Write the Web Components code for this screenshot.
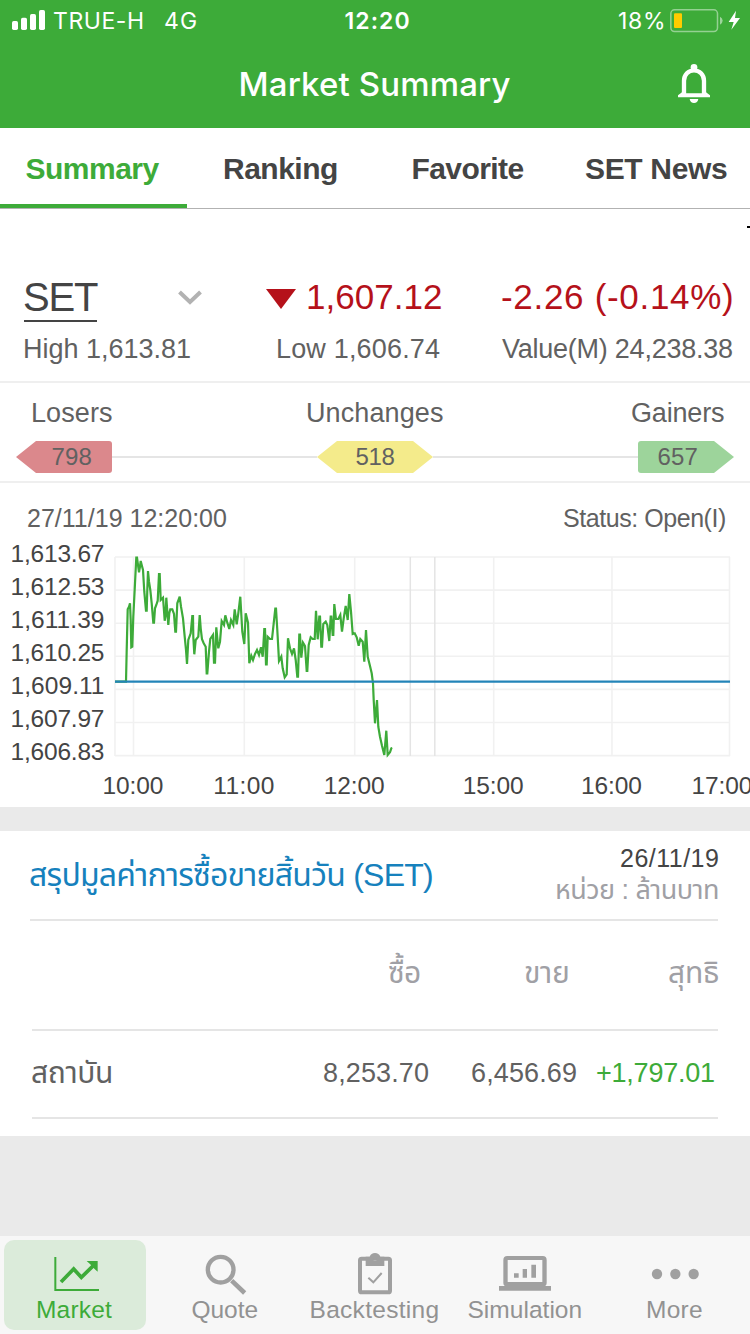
<!DOCTYPE html>
<html lang="th">
<head>
<meta charset="utf-8">
<title>Market Summary</title>
<style>
  :root {
    --green: #3dab39;
    --red: #b5111a;
    --blue: #1681bd;
    --text: #444;
    --text-soft: #616161;
    --muted: #a0a0a5;
    --rule: #e5e5e5;
    --band: #eaeaea;
  }
  body {
    margin: 0;
    width: 750px;
    height: 1334px;
    overflow: hidden;
    display: flex;
    flex-direction: column;
    background: var(--band);
    color: var(--text-soft);
    font-family: "Liberation Sans", "Noto Sans Thai", sans-serif;
  }
</style>
</head>
<body>
<status-bar></status-bar>
<nav-header><ink-text width="270">Market Summary</ink-text></nav-header>
<tab-strip>
  <tab-item active><ink-text width="134">Summary</ink-text></tab-item>
  <tab-item><ink-text width="112">Ranking</ink-text></tab-item>
  <tab-item><ink-text width="110">Favorite</ink-text></tab-item>
  <tab-item><ink-text width="142">SET News</ink-text></tab-item>
</tab-strip>
<index-quote></index-quote>
<market-breadth></market-breadth>
<intraday-chart></intraday-chart>
<trade-summary></trade-summary>
<bottom-bar>
  <bottom-item icon="market" active><ink-text width="74">Market</ink-text></bottom-item>
  <bottom-item icon="quote"><ink-text width="65">Quote</ink-text></bottom-item>
  <bottom-item icon="backtesting"><ink-text width="127">Backtesting</ink-text></bottom-item>
  <bottom-item icon="simulation"><ink-text width="113">Simulation</ink-text></bottom-item>
  <bottom-item icon="more"><ink-text width="54">More</ink-text></bottom-item>
</bottom-bar>

<script>
class BaseElement extends HTMLElement {
  constructor() {
    super();
    this.attachShadow({ mode: 'open' });
    this.shadowRoot.innerHTML = this.template();
  }

  template() {
    return '<slot></slot>';
  }
}

// One line of text whose glyphs are tracked so that they span exactly `width` pixels.
class InkText extends BaseElement {
  template() {
    return `
      <style>
        :host { display: block; flex: none; white-space: nowrap; }
        span { display: block; }
      </style>
      <span><slot></slot></span>
    `;
  }

  connectedCallback() {
    var width = parseFloat(this.getAttribute('width'));
    var text = this.textContent.trim();
    var ctx = document.createElement('canvas').getContext('2d');
    ctx.font = getComputedStyle(this).font;

    var box = ctx.measureText(text);
    var ink = box.actualBoundingBoxLeft + box.actualBoundingBoxRight;
    var count = Array.from(new Intl.Segmenter('th').segment(text)).length;
    var span = this.shadowRoot.querySelector('span');

    this.style.width = width + 'px';
    span.style.marginLeft = box.actualBoundingBoxLeft + 'px';
    if (count > 1) {
      span.style.letterSpacing = ((width - ink) / (count - 1)).toFixed(3) + 'px';
    }
  }
}

class StatusBar extends BaseElement {
  template() {
    return `
      <style>
        :host {
          display: grid;
          grid-template-columns: 1fr auto 1fr;
          height: 40px;
          padding: 0 9px 0 12px;
          background: var(--green);
          color: #fff;
          font: 400 23px/42px Inter, sans-serif;
        }
        div { display: flex; }
        .time { font-weight: 600; padding-left: 2px; }
        .right { justify-content: flex-end; }
        svg { display: block; flex: none; }
        .signal { margin: 10px 9px 0 0; }
        .network { margin-left: 22px; }
        .battery { margin: 9px 0 0 7px; }
      </style>
      <div>
        <svg class="signal" width="33" height="20" viewBox="0 0 99 60" fill="#fff">
          <rect x="0" y="33" width="18" height="27" rx="5"/>
          <rect x="27" y="23" width="18" height="37" rx="5"/>
          <rect x="54" y="12" width="18" height="48" rx="5"/>
          <rect x="81" y="0" width="18" height="60" rx="5"/>
        </svg>
        <ink-text width="89">TRUE-H</ink-text>
        <ink-text class="network" width="31">4G</ink-text>
      </div>
      <div class="time"><ink-text width="64">12:20</ink-text></div>
      <div class="right">
        <ink-text width="44">18%</ink-text>
        <svg class="battery" width="71" height="24" viewBox="885 27 213 72">
          <rect x="887.5" y="29.5" width="140" height="65" rx="11" fill="none" stroke="#fff" stroke-opacity=".45" stroke-width="4.5"/>
          <rect x="897" y="40" width="24" height="44" rx="3" fill="#fc0"/>
          <path d="M1035 50q8 5 8 12t-8 12z" fill="#fff" fill-opacity=".5"/>
          <path d="M1083 32l-22 34h15l-7 23 26-35h-15z" fill="#fff"/>
        </svg>
      </div>
    `;
  }
}

class NavHeader extends BaseElement {
  template() {
    return `
      <style>
        :host {
          display: grid;
          grid-template-columns: 1fr auto 1fr;
          height: 88px;
          padding: 0 40px 0 41px;
          box-sizing: border-box;
          background: var(--green);
          color: #fff;
          font: 550 33px/89px Inter, sans-serif;
        }
        svg { grid-column: 3; justify-self: end; margin-top: 24px; }
        slot { grid-column: 2; display: block; }
      </style>
      <slot></slot>
      <svg width="32" height="39" viewBox="909 192 96 117" fill="#fff">
        <path d="M927 286V242a30 31 0 0 1 60 0V286" fill="none" stroke="#fff" stroke-width="13"/>
        <circle cx="957" cy="202" r="10"/>
        <path d="M909 286l12-9v3h72v-3l12 9v6h-96z"/>
        <path d="M944 297h26q-2 12-13 12t-13-12z"/>
      </svg>
    `;
  }
}

class TabStrip extends BaseElement {
  template() {
    return `
      <style>
        :host {
          display: grid;
          grid-template-columns: 187px 188px 187px 188px;
          height: 81px;
          box-sizing: border-box;
          border-bottom: 1px solid #b2b2b2;
          background: #fff;
        }
      </style>
      <slot></slot>
    `;
  }
}

class TabItem extends BaseElement {
  template() {
    return `
      <style>
        :host {
          display: flex;
          justify-content: center;
          box-sizing: border-box;
          height: 80px;
          border-bottom: 4px solid transparent;
          color: var(--text);
          font-weight: 700;
          font-size: 30px;
          line-height: 82px;
        }
        :host([active]) { color: var(--green); border-color: var(--green); padding-right: 2px; }
      </style>
      <slot></slot>
    `;
  }
}

class IndexQuote extends BaseElement {
  template() {
    return `
      <style>
        :host {
          display: block;
          height: 172px;
          background: #fff;
          border-bottom: 2px solid #efefef;
        }
        .edge { width: 3px; height: 2px; margin-left: auto; background: #000; }
        .top { padding-top: 17px; height: 45px; }
        .row { display: grid; grid-template-columns: 242px 236px auto; padding-left: 24px; }
        .main { height: 52px; color: var(--red); font-size: 35px; line-height: 52px; }
        .name { display: flex; color: var(--text); font-size: 40px; line-height: 52px; }
        .name b { width: 73px; height: 49px; border-bottom: 2px solid var(--text); font-weight: 400; }
        .name svg { margin: 19px 0 0 81px; }
        .price { display: flex; }
        .price svg { margin: 18px 12px 0 0; }
        .sub { font-size: 27px; line-height: 52px; }
        .high { padding-left: 1px; }
        .low { padding-left: 12px; }
      </style>
      <div class="top"><div class="edge"></div></div>
      <div class="row main">
        <div class="name">
          <b><ink-text width="74">SET</ink-text></b>
          <svg width="24" height="16" viewBox="0 0 24 16"><path d="M1.5 2L12 12 22.500 2" fill="none" stroke="#b2b2b2" stroke-width="4"/></svg>
        </div>
        <div class="price">
          <svg width="30" height="20" viewBox="0 0 30 20"><path d="M0 0h30L15 20z" fill="#b5111a"/></svg>
          <ink-text width="133">1,607.12</ink-text>
        </div>
        <ink-text width="230">-2.26 (-0.14%)</ink-text>
      </div>
      <div class="row sub">
        <ink-text class="high" width="165">High 1,613.81</ink-text>
        <ink-text class="low" width="162">Low 1,606.74</ink-text>
        <ink-text width="230">Value(M) 24,238.38</ink-text>
      </div>
    `;
  }
}

// Count tag with a pointed end; `shape` is left, both or right.
class BreadthTag extends BaseElement {
  template() {
    return `
      <style>
        :host {
          display: flex;
          justify-content: center;
          box-sizing: border-box;
          width: 96px;
          height: 32px;
          background: #db888c;
          border-radius: 3px;
          font-size: 24px;
          line-height: 32px;
        }
        :host([shape="left"]) {
          padding-left: 16px;
          clip-path: polygon(0 50%, 20px 0, 100% 0, 100% 100%, 20px 100%);
        }
        :host([shape="both"]) {
          width: 116px;
          background: #f4eb8b;
          clip-path: polygon(0 50%, 20px 0, 96px 0, 100% 50%, 96px 100%, 20px 100%);
        }
        :host([shape="right"]) {
          padding-right: 16px;
          background: #9dd49b;
          clip-path: polygon(0 0, 76px 0, 100% 50%, 76px 100%, 0 100%);
        }
      </style>
      <slot></slot>
    `;
  }
}

class MarketBreadth extends BaseElement {
  template() {
    return `
      <style>
        :host {
          display: block;
          height: 98px;
          background: #fff;
          border-bottom: 2px solid #efefef;
        }
        .labels {
          display: grid;
          grid-template-columns: 1fr auto 1fr;
          height: 58px;
          padding: 0 26px 0 33px;
          font-size: 27px;
          line-height: 60px;
        }
        .labels :last-child { justify-self: end; }
        .labels :nth-child(2) { margin-right: 6px; }
        .tags { display: flex; align-items: center; padding: 0 16px; }
        i { flex: 1; height: 2px; background: var(--rule); }
      </style>
      <div class="labels">
        <ink-text width="79">Losers</ink-text>
        <ink-text width="135">Unchanges</ink-text>
        <ink-text width="92">Gainers</ink-text>
      </div>
      <div class="tags">
        <breadth-tag shape="left"><ink-text width="39">798</ink-text></breadth-tag>
        <i></i>
        <breadth-tag shape="both"><ink-text width="39">518</ink-text></breadth-tag>
        <i></i>
        <breadth-tag shape="right"><ink-text width="39">657</ink-text></breadth-tag>
      </div>
    `;
  }
}

class IntradayChart extends BaseElement {
  template() {
    // x, y pairs in thirds of a pixel, from (100, 0) of the plot area
    var points = [
      45,425, 78,425, 80,330, 83,208, 87,200, 90,190, 92,240, 94,322, 97,320, 100,230,
      105,130, 109,53, 111,53, 114,75, 117,97, 120,80, 122,63, 125,75, 129,90, 133,155,
      138,212, 140,212, 142,150, 144,93, 147,125, 151,150, 155,190, 160,248, 162,248, 165,205,
      169,195, 173,182, 177,102, 179,102, 182,180, 189,173, 191,200, 194,242, 197,225, 199,173,
      202,215, 205,255, 208,220, 211,208, 217,208, 222,222, 226,275, 228,275, 232,190, 239,170,
      243,200, 249,235, 254,290, 258,330, 261,372, 265,300, 272,280, 277,228, 279,228, 280,290,
      283,343, 287,300, 295,290, 299,225, 302,265, 306,298, 311,310, 317,320, 320,400, 322,400,
      327,335, 331,297, 339,285, 342,368, 345,368, 349,262, 352,295, 355,325, 360,305, 365,243,
      372,255, 376,226, 382,248, 388,267, 393,240, 400,255, 404,208, 410,253, 415,220, 421,170,
      427,275, 433,312, 437,220, 444,248, 448,370, 454,347, 459,360, 465,342, 471,330, 477,345,
      483,322, 488,350, 493,267, 495,267, 498,373, 500,373, 503,290, 510,297, 516,297, 521,250,
      526,206, 528,206, 532,270, 537,363, 544,350, 548,385, 554,412, 560,403, 564,295, 570,325,
      576,342, 582,325, 587,360, 592,410, 594,410, 598,284, 600,284, 604,353, 609,308, 615,318,
      620,393, 622,393, 626,315, 632,292, 638,297, 644,297, 648,212, 653,298, 658,230, 660,230,
      664,320, 666,320, 670,252, 677,245, 682,255, 688,303, 692,230, 694,230, 698,285, 700,285,
      703,192, 708,237, 715,237, 721,225, 726,275, 731,235, 737,198, 743,240, 748,162, 753,215,
      758,282, 764,280, 770,292, 776,317, 781,297, 788,305, 793,365, 798,270, 803,350, 810,378,
      815,400, 819,430, 821,480, 825,550, 831,480, 835,560, 840,590, 846,617, 853,645, 859,572,
      863,645, 870,637, 874,625, 877,624
    ];
    var path = '';
    for (var i = 0; i < points.length; i += 2) {
      path += (i ? 'L' : 'M') + (100 + points[i] / 3).toFixed(1) + ' ' + (points[i + 1] / 3).toFixed(1);
    }

    var prices = ['1,613.67', '1,612.53', '1,611.39', '1,610.25', '1,609.11', '1,607.97', '1,606.83'];
    var rows = prices.map(function (price, n) {
      var y = 17 + n * 33.1;
      return '<path class="grid" d="M115 ' + y + 'H730"/>' +
        '<text x="10.500" y="' + (22.300 + n * 33) + '" textLength="94">' + price + '</text>';
    }).join('');

    var hours = [[133.5, '10:00'], [244.3, '11:00'], [354.7, '12:00'], [493.7, '15:00'], [612, '16:00'], [722.500, '17:00']];
    var cols = hours.map(function (hour) {
      var x = hour[1] === '17:00' ? 729.5 : hour[0];
      return '<path class="grid" d="M' + x + ' 17V216"/>' +
        '<text x="' + (hour[0] - 31) + '" y="254" textLength="61">' + hour[1] + '</text>';
    }).join('');

    return `
      <style>
        :host { display: block; height: 324px; background: #fff; }
        .head {
          display: flex;
          justify-content: space-between;
          height: 57px;
          padding: 0 25px 0 28px;
          font-size: 25px;
          line-height: 71px;
        }
        svg { display: block; }
        text { font-size: 24.500px; fill: var(--text); }
        .grid { fill: none; stroke: #f1f1f1; stroke-width: 1.600; }
        .break { fill: none; stroke: #e4e4e4; stroke-width: 1.500; }
      </style>
      <div class="head">
        <ink-text width="198">27/11/19 12:20:00</ink-text>
        <ink-text width="161">Status: Open(I)</ink-text>
      </div>
      <svg width="750" height="267" viewBox="0 0 750 267">
        ${rows}
        ${cols}
        <path class="grid" d="M115 17V216"/>
        <path class="break" d="M410.300 17V216M434.800 17V216"/>
        <path d="${path}" fill="none" stroke="#3dab39" stroke-width="2.200"/>
        <path d="M115 141.700H730" stroke="#2384b8" stroke-width="2.200"/>
      </svg>
    `;
  }
}

class TradeSummary extends BaseElement {
  template() {
    return `
      <style>
        :host {
          display: block;
          box-sizing: border-box;
          height: 305px;
          margin-top: 24px;
          padding: 0 32px 0 30px;
          background: #fff;
        }
        .head {
          display: flex;
          justify-content: space-between;
          height: 88px;
          border-bottom: 2px solid var(--rule);
        }
        .title { color: var(--blue); font-size: 32px; line-height: 89px; }
        .info { display: flex; flex-direction: column; align-items: flex-end; }
        .date { color: var(--text); font-size: 25px; line-height: 55px; height: 44px; }
        .unit { color: var(--muted); font-size: 27px; line-height: 30px; }
        .row {
          display: grid;
          grid-template-columns: 1fr 105px 148px 138px;
          justify-items: end;
          margin-left: 2px;
          border-bottom: 2px solid var(--rule);
          font-size: 27px;
        }
        .row > :first-child { justify-self: start; }
        .labels { height: 108px; line-height: 104px; color: var(--muted); font-size: 30px; }
        .labels :nth-child(2) { margin-right: 12px; }
        .labels :nth-child(3) { margin-right: 12px; }
        .values { height: 86px; line-height: 85px; }
        .values :first-child { font-size: 30px; line-height: 83px; }
        .values :nth-child(2), .values :nth-child(3) { margin-right: 4px; }
        .values .net { color: var(--green); margin-right: 4px; }
      </style>
      <div class="head">
        <ink-text class="title" width="402">สรุปมูลค่าการซื้อขายสิ้นวัน (SET)</ink-text>
        <div class="info">
          <ink-text class="date" width="97">26/11/19</ink-text>
          <ink-text class="unit" width="161">หน่วย : ล้านบาท</ink-text>
        </div>
      </div>
      <div class="row labels">
        <span></span>
        <ink-text width="31">ซื้อ</ink-text>
        <ink-text width="43">ขาย</ink-text>
        <ink-text width="49">สุทธิ</ink-text>
      </div>
      <div class="row values">
        <ink-text width="79">สถาบัน</ink-text>
        <ink-text width="104">8,253.70</ink-text>
        <ink-text width="104">6,456.69</ink-text>
        <ink-text class="net" width="117">+1,797.01</ink-text>
      </div>
    `;
  }
}

class BottomBar extends BaseElement {
  template() {
    return `
      <style>
        :host {
          display: grid;
          grid-template-columns: repeat(5, 150px);
          height: 98px;
          margin-top: auto;
          background: #f7f7f7;
        }
      </style>
      <slot></slot>
    `;
  }
}

var ICONS = {
  market: `
    <path d="M-59 21V120H72" fill="none" stroke="currentColor" stroke-width="6"/>
    <path d="M-42 96L-4 57 19 82 55 47" fill="none" stroke="currentColor" stroke-width="11"/>
    <path d="M35 33H68V65L58 56 45 42z"/>`,
  quote: `
    <circle cx="-13" cy="59" r="38.500" fill="none" stroke="currentColor" stroke-width="13"/>
    <path d="M20 92L59 129" fill="none" stroke="currentColor" stroke-width="14"/>`,
  backtesting: `
    <rect x="-45" y="26" width="90" height="101" rx="5" fill="none" stroke="currentColor" stroke-width="12"/>
    <path fill-rule="evenodd" d="M-28 20H-16A17 17 0 0 1 16 20H28V48H-28zM-6 27a6 6 0 1 0 12 0a6 6 0 1 0-12 0z"/>
    <path d="M-20 83L-5 97 20 69" fill="none" stroke="currentColor" stroke-width="6"/>`,
  simulation: `
    <path fill-rule="evenodd" d="M-53 18H53Q65 18 65 30V98Q65 108 57 108H-57Q-65 108-65 98V30Q-65 18-53 18zM-52 30V96H52V30z"/>
    <path d="M-78 108H78V122H-78z"/>
    <path d="M-33 70h14v13h-14zM-7 57H6V83H-7zM19 44H33V83H19z"/>`,
  more: `
    <circle cx="-54" cy="72" r="15.500"/>
    <circle cx="1" cy="72" r="15.500"/>
    <circle cx="56" cy="72" r="15.500"/>`
};

class BottomItem extends BaseElement {
  template() {
    return `
      <style>
        :host {
          display: flex;
          flex-direction: column;
          align-items: center;
          box-sizing: border-box;
          height: 90px;
          margin: 4px;
          padding-top: 10px;
          border-radius: 10px;
          color: #929292;
          font-size: 24.500px;
          line-height: 23px;
        }
        :host([active]) { background: #dbebda; color: var(--green); }
        svg { display: block; flex: none; fill: currentColor; color: #a0a0a0; }
        :host([active]) svg { color: inherit; }
      </style>
      <svg width="54" height="48" viewBox="-81 0 162 144">${ICONS[this.getAttribute('icon')]}</svg>
      <slot></slot>
    `;
  }
}

customElements.define('status-bar', StatusBar);
customElements.define('nav-header', NavHeader);
customElements.define('tab-strip', TabStrip);
customElements.define('tab-item', TabItem);
customElements.define('index-quote', IndexQuote);
customElements.define('breadth-tag', BreadthTag);
customElements.define('market-breadth', MarketBreadth);
customElements.define('intraday-chart', IntradayChart);
customElements.define('trade-summary', TradeSummary);
customElements.define('bottom-bar', BottomBar);
customElements.define('bottom-item', BottomItem);
// last, since it measures with the font that its container passes down
customElements.define('ink-text', InkText);
</script>
</body>
</html>
